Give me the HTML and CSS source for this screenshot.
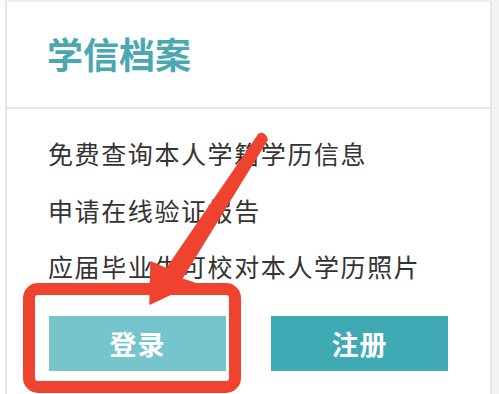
FILE: index.html
```html
<!DOCTYPE html>
<html lang="zh-CN">
<head>
<meta charset="utf-8">
<link rel="stylesheet" href="styles.css">
</head>
<body>
<div class="page">
  <div class="gutter"></div>
  <div class="card">
    <div class="card-head">
      <h1 class="title">学信档案</h1>
    </div>
    <div class="card-body">
      <ul class="features">
        <li>免费查询本人学籍学历信息</li>
        <li>申请在线验证报告</li>
        <li>应届毕业生可校对本人学历照片</li>
      </ul>
      <div class="actions">
        <a class="btn btn-login">登录</a>
        <a class="btn btn-register">注册</a>
      </div>
    </div>
  </div>
  <div class="side"></div>
  <svg class="annot" width="499" height="394" viewBox="0 0 499 394">
    <rect x="29" y="289" width="206" height="98" rx="9" ry="9" fill="none" stroke="#ef4330" stroke-width="12"/>
    <path d="M258.8 134.3 Q264 131 267.2 139.7 L181.5 279 L194 283 L150 304 L151 262 L166.5 269 Z" fill="#ef4330" stroke="#ef4330" stroke-width="1.5" stroke-linejoin="round"/>
  </svg>
</div>
</body>
</html>
```
FILE: styles.css
```css
* { box-sizing: border-box; }
html, body { margin: 0; padding: 0; background: #fff; }
body { font-family: "Noto Sans CJK SC", "Noto Sans", sans-serif; }
.page {
  position: relative;
  display: flex;
  width: 499px;
  height: 394px;
  overflow: hidden;
}
.gutter { width: 5px; flex: none; }
.card {
  width: 487px;
  flex: none;
  border-left: 2px solid #e6e6e6;
  border-right: 2px solid #e6e6e6;
  border-top: 2px solid #ededed;
  display: flex;
  flex-direction: column;
}
.card-head {
  height: 107px;
  border-bottom: 2px solid #e6e6e6;
  padding-left: 40px;
  display: flex;
  align-items: center;
}
.title {
  margin: 0;
  font-size: 36px;
  font-weight: 700;
  color: #4ba8b1;
  letter-spacing: 0;
  line-height: 1;
  padding-bottom: 4px;
}
.card-body { padding-left: 41px; padding-top: 16px; }
.features { list-style: none; margin: 0; padding: 0; }
.features li {
  height: 56.5px;
  line-height: 56.5px;
  font-size: 25px;
  letter-spacing: 1.6px;
  color: #333;
}
.actions {
  display: flex;
  gap: 45px;
  margin-top: 21px;
  padding-left: 1px;
}
.btn {
  width: 177px;
  height: 55px;
  display: flex;
  align-items: center;
  justify-content: center;
  color: #fff;
  font-size: 27px;
  font-weight: 700;
  letter-spacing: 1px;
}
.btn-login { background: #76c5cc; }
.btn-register { background: #3faab4; }
.side { flex: 1; background: #f3f3f3; }
.annot { position: absolute; left: 0; top: 0; pointer-events: none; }
```
